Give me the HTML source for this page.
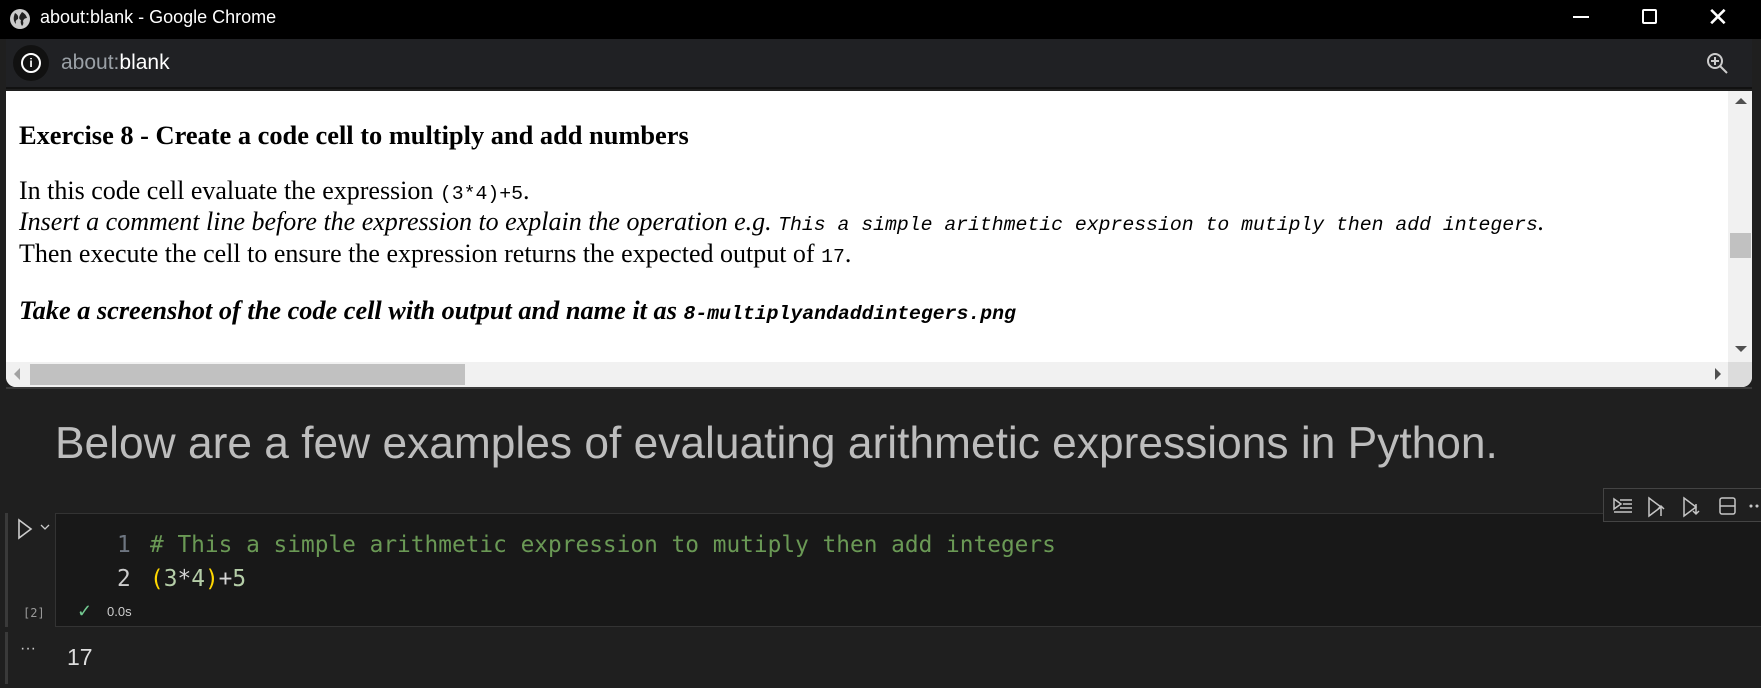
<!DOCTYPE html>
<html><head><meta charset="utf-8"><style>
*{margin:0;padding:0;box-sizing:border-box}
body{width:1761px;height:688px;background:#1f1f1f;position:relative;overflow:hidden;font-family:"Liberation Sans",sans-serif}
.abs{position:absolute}
.titlebar{left:0;top:0;width:1761px;height:39px;background:#000}
.addr{left:6px;top:39px;width:1746px;height:50px;background:#202124;border-bottom:2px solid #111}
.page{left:6px;top:91px;width:1746px;height:296px;background:#fff;border-radius:0 0 10px 10px;overflow:hidden;border:0}
.serif{font-family:"Liberation Serif",serif;color:#000;white-space:nowrap;font-size:26px;line-height:30px}
.mono{font-family:"Liberation Mono",monospace;font-size:19.8px;line-height:20px}
.code{font-family:"DejaVu Sans Mono","Liberation Mono",monospace;font-size:22.8px;white-space:pre}
</style></head><body>
<div class="abs titlebar">
  <svg class="abs" style="left:9px;top:8px" width="22" height="22" viewBox="0 0 22 22"><circle cx="11" cy="11" r="10" fill="#ccc"/><path d="M6 5q4 2 3 6q-3 1-2 5q-4-4-1-11zM13 4q4 2 5 6q-3 0-4 3q1 3-1 5q-2-3-1-6q-3-1-1-5z" fill="#222"/></svg>
  <div class="abs" style="left:40px;top:7px;color:#fff;font-size:18px">about:blank - Google Chrome</div>
  <div class="abs" style="left:1573px;top:16px;width:16px;height:2px;background:#fff"></div>
  <div class="abs" style="left:1642px;top:9px;width:15px;height:15px;border:2px solid #fff;border-radius:2px"></div>
  <div class="abs" style="left:1707px;top:2px;color:#fff;font-size:26px">✕</div>
</div>
<div class="abs addr">
  <div class="abs" style="left:7px;top:6px;width:36px;height:36px;border-radius:18px;background:#111"></div>
  <div class="abs" style="left:15px;top:14px;width:20px;height:20px;border:2px solid #fff;border-radius:10px;color:#fff;font-size:12px;text-align:center;line-height:16px;font-weight:bold">i</div>
  <div class="abs" style="left:55px;top:12px;font-size:21px;color:#9aa0a6">about:<span style="color:#fff">blank</span></div>
  <svg class="abs" style="left:1700px;top:13px" width="24" height="24" viewBox="0 0 24 24"><circle cx="9" cy="9" r="7" fill="none" stroke="#ccc" stroke-width="2"/><path d="M9 5v8M5 9h8M14 14l7 7" stroke="#ccc" stroke-width="2"/></svg>
</div>
<div class="abs page">
  <div class="abs serif" style="left:13px;top:29px;font-weight:bold;font-size:26.4px">Exercise 8 - Create a code cell to multiply and add numbers</div>
  <div class="abs serif" style="left:13px;top:85px">In this code cell evaluate the expression <span class="mono">(3*4)+5</span>.</div>
  <div class="abs serif" style="left:13px;top:116px"><i>Insert a comment line before the expression to explain the operation e.g. <span class="mono">This a simple arithmetic expression to mutiply then add integers</span>.</i></div>
  <div class="abs serif" style="left:13px;top:148px">Then execute the cell to ensure the expression returns the expected output of <span class="mono">17</span>.</div>
  <div class="abs serif" style="left:13px;top:205px;font-weight:bold;font-style:italic;font-size:26.3px">Take a screenshot of the code cell with output and name it as <span class="mono">8-multiplyandaddintegers.png</span></div>
  <div class="abs" style="left:1722px;top:0;width:24px;height:271px;background:#f1f1f1"></div>
  <div class="abs" style="left:1724px;top:142px;width:21px;height:25px;background:#c1c1c1"></div>
  <div class="abs" style="left:1729px;top:7px;width:0;height:0;border:6px solid transparent;border-bottom:6px solid #505050;border-top:0"></div>
  <div class="abs" style="left:1729px;top:255px;width:0;height:0;border:6px solid transparent;border-top:6px solid #505050;border-bottom:0"></div>
  <div class="abs" style="left:0;top:271px;width:1722px;height:25px;background:#f1f1f1"></div>
  <div class="abs" style="left:24px;top:273px;width:435px;height:21px;background:#c1c1c1"></div>
  <div class="abs" style="left:8px;top:277px;width:0;height:0;border:6px solid transparent;border-right:6px solid #a3a3a3;border-left:0"></div>
  <div class="abs" style="left:1709px;top:277px;width:0;height:0;border:6px solid transparent;border-left:6px solid #505050;border-right:0"></div>
  <div class="abs" style="left:1722px;top:271px;width:24px;height:25px;background:#dcdcdc"></div>
</div>
<div class="abs" style="left:6px;top:387px;width:1746px;height:2px;background:#3a3a3a"></div>
<div class="abs" style="left:55px;top:419px;font-size:44.3px;color:#bdbdbd;white-space:nowrap">Below are a few examples of evaluating arithmetic expressions in Python.</div>
<div class="abs" style="left:5px;top:513px;width:3px;height:114px;background:#3a3a3a"></div>
<div class="abs" style="left:5px;top:632px;width:3px;height:52px;background:#3a3a3a"></div>
<div class="abs" style="left:55px;top:513px;width:1706px;height:114px;background:#181818;border:1px solid #333;border-right:0"></div>
<svg class="abs" style="left:17px;top:518px" width="38" height="22" viewBox="0 0 38 22"><path d="M2 2l12 9-12 9z" fill="none" stroke="#ccc" stroke-width="1.6"/><path d="M24 7l4 4 4-4" fill="none" stroke="#ccc" stroke-width="1.3"/></svg>
<div class="abs" style="left:1603px;top:488px;width:158px;height:34px;background:#1f1f1f;border:1px solid #444;border-right:0"></div>
<svg class="abs" style="left:1610px;top:494px" width="151" height="24" viewBox="0 0 151 24" fill="none" stroke="#c5c5c5" stroke-width="1.5"><path d="M4 5l7 5-7 5zM10 6h12M13 10h9M10 14h12M4 18h18"/><path d="M39 4l12 9-12 9zM51 22v-10M48 15l3-3 3 3"/><path d="M74 4l12 9-12 9zM86 10v10M83 17l3 3 3-3"/><rect x="110" y="4" width="15" height="16" rx="2"/><path d="M110 12h15"/><circle cx="141" cy="12" r=".8" fill="#c5c5c5"/><circle cx="147" cy="12" r=".8" fill="#c5c5c5"/></svg>
<div class="abs code" style="left:117px;top:532px;color:#6e7681">1</div>
<div class="abs code" style="left:150px;top:532px;color:#6a9955"># This a simple arithmetic expression to mutiply then add integers</div>
<div class="abs code" style="left:117px;top:566px;color:#ccc">2</div>
<div class="abs code" style="left:150px;top:566px;color:#b5cea8"><span style="color:#ffd700">(</span>3<span style="color:#d4d4d4">*</span>4<span style="color:#ffd700">)</span><span style="color:#d4d4d4">+</span>5</div>
<div class="abs" style="left:23px;top:606px;font-size:12px;color:#999;font-family:'DejaVu Sans Mono',monospace">[2]</div>
<div class="abs" style="left:77px;top:601px;font-size:18px;color:#73c991">✓</div>
<div class="abs" style="left:107px;top:604px;font-size:13px;color:#ccc">0.0s</div>
<div class="abs" style="left:20px;top:640px;font-size:16px;color:#ccc">···</div>
<div class="abs" style="left:67px;top:644px;font-size:23px;color:#ddd">17</div>
</body></html>
